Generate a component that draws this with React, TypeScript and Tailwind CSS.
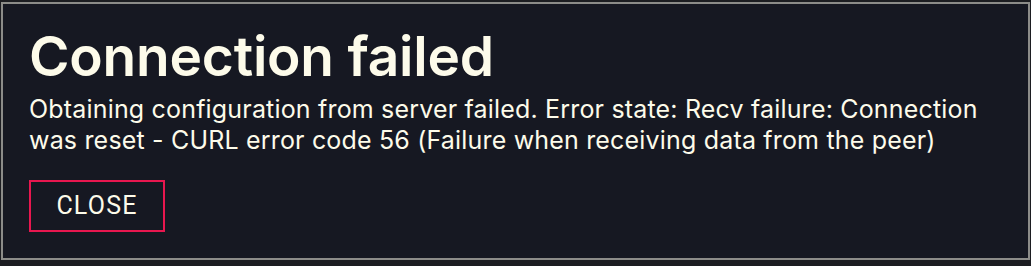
export default function App() {
  return (
    <div className="w-[1031px] h-[266px] bg-[#1c1d21] pt-[2px] pl-[1px] overflow-hidden">
      <div className="w-[1029px] h-[258px] border-2 border-[#8c8c89] bg-[#161822] pl-[26px] pt-[22px] text-[#fdfbea]">
        <h1 className="font-['Inter',sans-serif] font-semibold text-[55px] leading-[60px] tracking-[-0.2px]">
          Connection failed
        </h1>
        <p className="mt-[8px] font-['Inter',sans-serif] text-[25px] leading-[31px] tracking-[0.18px]">
          Obtaining configuration from server failed. Error state: Recv failure: Connection
          <br />
          was reset - CURL error code 56 (Failure when receiving data from the peer)
        </p>
        <button className="mt-[24px] w-[136px] h-[52px] border-2 border-[#e8174f] font-['Roboto',sans-serif] font-normal text-[25px] tracking-[1.2px] text-[#fdfbea]">
          CLOSE
        </button>
      </div>
    </div>
  );
}
